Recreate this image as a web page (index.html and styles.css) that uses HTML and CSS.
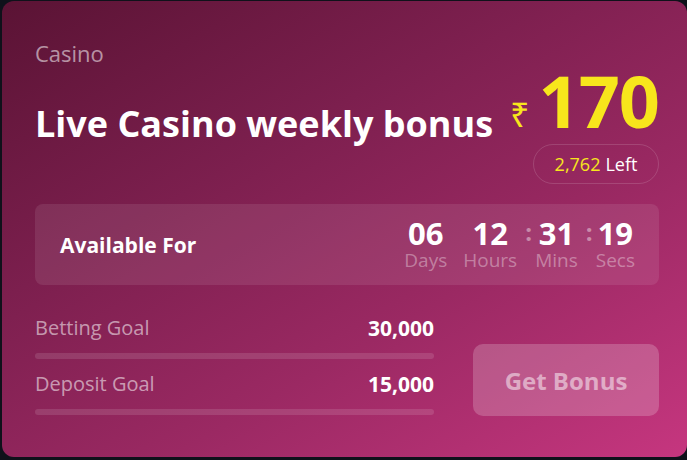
FILE: index.html
```html
<!DOCTYPE html>
<html>
<head>
<meta charset="utf-8">
<link rel="stylesheet" href="styles.css">
</head>
<body>
<div class="card">
  <div class="top">
    <div class="heading">
      <div class="cat">Casino</div>
      <h1 class="title">Live Casino weekly bonus</h1>
    </div>
    <div class="prize">
      <div class="amount"><span class="cur">₹</span><span class="num">170</span></div>
      <div class="left"><span class="cnt">2,762</span> Left</div>
    </div>
  </div>
  <div class="avail">
    <div class="avail-label">Available For</div>
    <div class="timer">
      <div class="unit"><span class="v">06</span><span class="l">Days</span></div>
      <div class="unit"><span class="v">12</span><span class="l">Hours</span></div>
      <div class="sep">:</div>
      <div class="unit"><span class="v">31</span><span class="l">Mins</span></div>
      <div class="sep">:</div>
      <div class="unit"><span class="v">19</span><span class="l">Secs</span></div>
    </div>
  </div>
  <div class="bottom">
    <div class="goals">
      <div class="goal">
        <div class="goal-row"><span class="gname">Betting Goal</span><span class="gval">30,000</span></div>
        <div class="bar"></div>
      </div>
      <div class="goal">
        <div class="goal-row"><span class="gname">Deposit Goal</span><span class="gval">15,000</span></div>
        <div class="bar"></div>
      </div>
    </div>
    <button class="btn">Get Bonus</button>
  </div>
</div>
</body>
</html>
```
FILE: styles.css
```css
* { box-sizing: border-box; }
html, body { margin: 0; padding: 0; }
body {
  background: #0f111a;
  font-family: "Open Sans", "Liberation Sans", sans-serif;
  width: 687px;
  height: 460px;
  overflow: hidden;
}
.card {
  margin: 1px 0 0 2px;
  width: 685px;
  height: 456px;
  border-radius: 12px;
  background: linear-gradient(150deg, #5a1334 0%, #7c1f4e 35%, #9b2963 65%, #c6367f 100%);
  padding: 38px 28px 0 33px;
  color: #fff;
}
.top {
  display: flex;
  justify-content: space-between;
  align-items: flex-start;
  height: 165px;
}
.cat {
  font-size: 22px;
  line-height: 28px;
  color: rgba(255,255,255,0.55);
}
.title {
  margin: 35px 0 0 0;
  font-size: 36px;
  line-height: 44px;
  font-weight: 700;
}
.prize {
  display: flex;
  flex-direction: column;
  align-items: flex-end;
  margin-top: 30px;
}
.amount {
  display: flex;
  align-items: flex-end;
  color: #f7e61c;
  font-weight: 700;
  line-height: 1;
}
.cur {
  font-size: 34px;
  font-weight: 400;
  line-height: 34px;
  margin-right: 9px;
}
.num {
  font-size: 72px;
  letter-spacing: -1px;
  line-height: 62px;
}
.left {
  margin-top: 13px;
  height: 40px;
  width: 126px;
  border: 1px solid rgba(255,255,255,0.14);
  border-radius: 20px;
  display: flex;
  align-items: center;
  justify-content: center;
  font-size: 18px;
}
.cnt { color: #f7e61c; margin-right: 5px; }
.avail {
  height: 81px;
  border-radius: 8px;
  background: rgba(255,255,255,0.09);
  display: flex;
  align-items: center;
  justify-content: space-between;
  padding: 0 24px 0 25px;
}
.avail-label {
  font-size: 21px;
  font-weight: 700;
}
.timer {
  display: flex;
  align-items: flex-start;
  margin-top: -3px;
}
.unit {
  display: flex;
  flex-direction: column;
  align-items: center;
}
.unit + .unit { margin-left: 16px; }
.v {
  font-size: 31px;
  font-weight: 700;
  line-height: 34px;
}
.l {
  font-size: 19px;
  line-height: 20px;
  color: rgba(255,255,255,0.36);
}
.sep {
  width: 18px;
  padding-left: 5px;
  text-align: center;
  font-size: 24px;
  font-weight: 700;
  line-height: 32px;
  color: rgba(255,255,255,0.42);
}
.bottom {
  display: flex;
  justify-content: space-between;
  margin-top: 31px;
}
.goals {
  width: 399px;
  display: flex;
  flex-direction: column;
  gap: 13px;
}
.goal-row {
  display: flex;
  justify-content: space-between;
  align-items: center;
  font-size: 20px;
  line-height: 24px;
}
.gname { color: rgba(255,255,255,0.55); }
.gval { font-weight: 700; font-size: 21px; }
.bar {
  margin-top: 13px;
  height: 6px;
  border-radius: 3px;
  background: rgba(255,255,255,0.12);
}
.btn {
  margin-top: 28px;
  width: 186px;
  height: 72px;
  border: none;
  border-radius: 10px;
  background: rgba(255,255,255,0.2);
  color: rgba(255,255,255,0.5);
  font-family: "Open Sans", "Liberation Sans", sans-serif;
  font-size: 24px;
  font-weight: 700;
}
```
